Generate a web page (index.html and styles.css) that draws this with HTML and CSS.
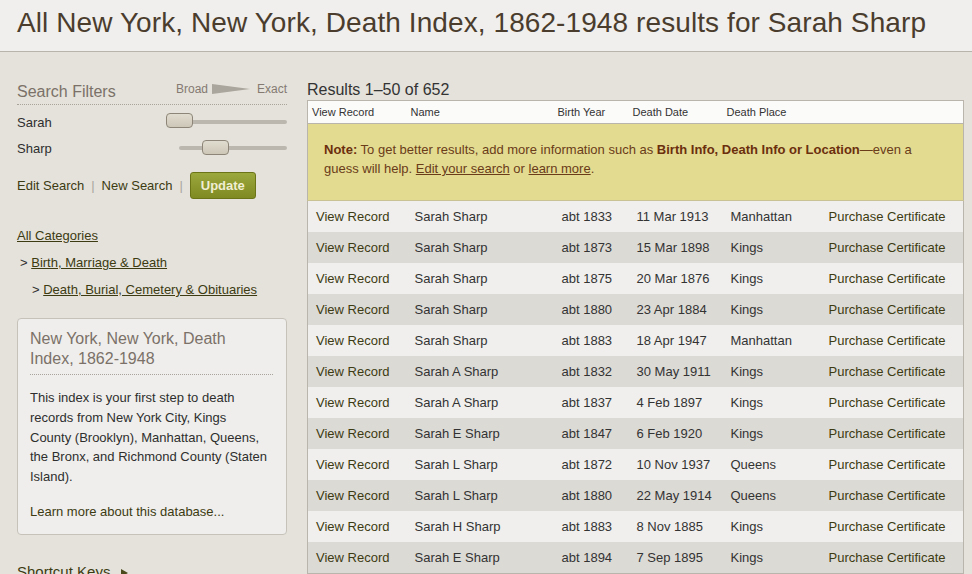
FILE: index.html
```html
<!DOCTYPE html>
<html lang="en">
<head>
    <meta charset="UTF-8">
    <title>Death Index Results</title>
    <link rel="stylesheet" href="styles.css">
</head>
<body>
    <header class="page-head">
        <h1>All New York, New York, Death Index, 1862-1948 results for Sarah Sharp</h1>
    </header>

    <div class="layout">
        <!-- Linke Spalte: Filter und Kategorien -->
        <aside class="sidebar">
            <div class="filter-head">
                <span class="filter-title">Search Filters</span>
                <span class="scale">
                    Broad
                    <svg class="wedge" width="38" height="12" viewBox="0 0 38 12"><polygon points="0,1 38,6 0,11" fill="#aaa59d"/></svg>
                    Exact
                </span>
            </div>

            <div class="filter-row first">
                <span>Sarah</span>
                <div class="slider slider-long"><span class="thumb"></span></div>
            </div>
            <div class="filter-row">
                <span>Sharp</span>
                <div class="slider slider-short"><span class="thumb"></span></div>
            </div>

            <div class="actions">
                <a href="#">Edit Search</a>
                <span class="sep">|</span>
                <a href="#">New Search</a>
                <span class="sep">|</span>
                <button class="update-btn">Update</button>
            </div>

            <ul class="categories">
                <li><a href="#" class="ul">All Categories</a></li>
                <li class="lvl1">&gt; <a href="#" class="ul">Birth, Marriage &amp; Death</a></li>
                <li class="lvl2">&gt; <a href="#" class="ul">Death, Burial, Cemetery &amp; Obituaries</a></li>
            </ul>

            <div class="about-box">
                <h2>New York, New York, Death Index, 1862-1948</h2>
                <p>This index is your first step to death records from New York City, Kings County (Brooklyn), Manhattan, Queens, the Bronx, and Richmond County (Staten Island).</p>
                <a href="#" class="learn">Learn more about this database...</a>
            </div>

            <div class="shortcuts">Shortcut Keys <svg class="arrow" width="7" height="8" viewBox="0 0 7 8"><polygon points="0,0 7,4 0,8" fill="#4b4a1c"/></svg></div>
        </aside>

        <!-- Rechte Spalte: Ergebnisse -->
        <main class="results">
            <div class="results-count">Results 1–50 of 652</div>
            <table class="result-table">
                <colgroup>
                    <col class="c1"><col class="c2"><col class="c3"><col class="c4"><col class="c5"><col class="c6">
                </colgroup>
                <thead>
                    <tr>
                        <th>View Record</th><th>Name</th><th>Birth Year</th><th>Death Date</th><th>Death Place</th><th></th>
                    </tr>
                </thead>
                <tbody class="note-body">
                    <tr>
                        <td colspan="6" class="note">
                            <b>Note:</b> To get better results, add more information such as <b>Birth Info, Death Info or Location</b>—even a guess will help. <a href="#">Edit your search</a> or <a href="#">learn more</a>.
                        </td>
                    </tr>
                </tbody>
                <tbody class="rows">
                    <tr><td class="lnk">View Record</td><td>Sarah Sharp</td><td>abt 1833</td><td>11 Mar 1913</td><td>Manhattan</td><td class="lnk">Purchase Certificate</td></tr>
                    <tr><td class="lnk">View Record</td><td>Sarah Sharp</td><td>abt 1873</td><td>15 Mar 1898</td><td>Kings</td><td class="lnk">Purchase Certificate</td></tr>
                    <tr><td class="lnk">View Record</td><td>Sarah Sharp</td><td>abt 1875</td><td>20 Mar 1876</td><td>Kings</td><td class="lnk">Purchase Certificate</td></tr>
                    <tr><td class="lnk">View Record</td><td>Sarah Sharp</td><td>abt 1880</td><td>23 Apr 1884</td><td>Kings</td><td class="lnk">Purchase Certificate</td></tr>
                    <tr><td class="lnk">View Record</td><td>Sarah Sharp</td><td>abt 1883</td><td>18 Apr 1947</td><td>Manhattan</td><td class="lnk">Purchase Certificate</td></tr>
                    <tr><td class="lnk">View Record</td><td>Sarah A Sharp</td><td>abt 1832</td><td>30 May 1911</td><td>Kings</td><td class="lnk">Purchase Certificate</td></tr>
                    <tr><td class="lnk">View Record</td><td>Sarah A Sharp</td><td>abt 1837</td><td>4 Feb 1897</td><td>Kings</td><td class="lnk">Purchase Certificate</td></tr>
                    <tr><td class="lnk">View Record</td><td>Sarah E Sharp</td><td>abt 1847</td><td>6 Feb 1920</td><td>Kings</td><td class="lnk">Purchase Certificate</td></tr>
                    <tr><td class="lnk">View Record</td><td>Sarah L Sharp</td><td>abt 1872</td><td>10 Nov 1937</td><td>Queens</td><td class="lnk">Purchase Certificate</td></tr>
                    <tr><td class="lnk">View Record</td><td>Sarah L Sharp</td><td>abt 1880</td><td>22 May 1914</td><td>Queens</td><td class="lnk">Purchase Certificate</td></tr>
                    <tr><td class="lnk">View Record</td><td>Sarah H Sharp</td><td>abt 1883</td><td>8 Nov 1885</td><td>Kings</td><td class="lnk">Purchase Certificate</td></tr>
                    <tr><td class="lnk">View Record</td><td>Sarah E Sharp</td><td>abt 1894</td><td>7 Sep 1895</td><td>Kings</td><td class="lnk">Purchase Certificate</td></tr>
                </tbody>
            </table>
        </main>
    </div>
</body>
</html>
```

FILE: styles.css
```css
/* Grundlayout */
body {
    margin: 0;
    font-family: "Liberation Sans", Arial, sans-serif;
    background-color: #e4e2db;
    color: #333;
    overflow: hidden;
}

a {
    color: #3d3b12;
    text-decoration: none;
}

/* Kopfzeile */
.page-head {
    background-color: #f0efed;
    border-bottom: 1px solid #b8b3ab;
    padding: 7px 17px 12px;
}

.page-head h1 {
    margin: 0;
    font-size: 28px;
    font-weight: normal;
    line-height: 32px;
    letter-spacing: 0.09px;
    color: #4b3d2e;
    white-space: nowrap;
}

.layout {
    display: flex;
    align-items: flex-start;
    padding-left: 17px;
}

/* Seitenleiste */
.sidebar {
    width: 270px;
    flex-shrink: 0;
    padding-top: 30px;
    font-size: 13px;
}

.filter-head {
    display: flex;
    justify-content: space-between;
    align-items: center;
    height: 20px;
    padding-bottom: 2px;
    border-bottom: 1px dotted #a8a39b;
}

.filter-title {
    font-size: 16px;
    color: #7b7168;
}

.scale {
    display: flex;
    align-items: center;
    font-size: 12px;
    color: #847a72;
    margin-top: -6px;
}

.wedge {
    margin: 0 7px 0 4px;
    width: 38px;
}

.filter-row {
    display: flex;
    justify-content: space-between;
    align-items: center;
    height: 26px;
    color: #2e2e2e;
}

.filter-row.first {
    margin-top: 4px;
}

.slider {
    position: relative;
    height: 4px;
    border-radius: 2px;
    background-color: #bcb7ae;
}

.slider-long { width: 121px; }
.slider-short { width: 108px; }

.thumb {
    position: absolute;
    top: -6px;
    width: 25px;
    height: 13px;
    border: 1px solid #8d8678;
    border-radius: 4px;
    background: linear-gradient(#e0dccf, #cdc7b8);
}

.slider-long .thumb { left: 0; top: -7px; }
.slider-short .thumb { left: 23px; }

.actions {
    display: flex;
    align-items: center;
    margin-top: 11px;
    height: 27px;
}

.sep {
    color: #aaa69e;
    margin: 0 7px;
}

.update-btn {
    width: 66px;
    height: 27px;
    font-family: inherit;
    font-size: 13px;
    font-weight: bold;
    color: #f0eed3;
    border: 1px solid #6c7418;
    border-radius: 3px;
    background: linear-gradient(#9ba83c, #7f8a22);
    padding: 0;
}

/* Kategorien */
.categories {
    list-style: none;
    margin: 23px 0 0;
    padding: 0;
    color: #2e2e2e;
}

.categories li {
    line-height: 27px;
}

.categories .lvl1 { padding-left: 3px; }
.categories .lvl2 { padding-left: 15px; }

.ul {
    text-decoration: underline;
}

/* Datenbank-Box */
.about-box {
    margin-top: 15px;
    background-color: #efeeec;
    border: 1px solid #c6c2ba;
    border-radius: 4px;
    padding: 10px 13px 12px 12px;
}

.about-box h2 {
    margin: 0;
    font-size: 16px;
    font-weight: normal;
    line-height: 20px;
    color: #7b7168;
    padding-bottom: 5px;
    border-bottom: 1px dotted #a8a39b;
}

.about-box p {
    margin: 13px 4px 0 0;
    line-height: 19.75px;
    color: #2e2e2e;
}

.learn {
    display: block;
    margin-top: 15px;
    line-height: 20px;
}

.shortcuts {
    margin-top: 28px;
    font-size: 15px;
    color: #3d3b12;
}

.arrow {
    margin-left: 6px;
}

/* Ergebnisbereich */
.results {
    margin-left: 20px;
    width: 657px;
    padding-top: 28px;
}

.results-count {
    font-size: 16px;
    line-height: 20px;
    color: #333;
}

.result-table {
    width: 657px;
    table-layout: fixed;
    border-collapse: collapse;
    border: 1px solid #b9b5ad;
    font-size: 13px;
}

.c1 { width: 99px; }
.c2 { width: 147px; }
.c3 { width: 75px; }
.c4 { width: 94px; }
.c5 { width: 98px; }

.result-table th {
    height: 22px;
    padding: 0 0 0 4px;
    text-align: left;
    font-size: 11px;
    font-weight: normal;
    background-color: #fbfbfa;
    border-bottom: 1px solid #b9b5ad;
}

.rows td {
    height: 31px;
    padding: 0 0 0 8px;
    white-space: nowrap;
}

.rows tr:nth-child(odd) td { background-color: #f0efed; }
.rows tr:nth-child(even) td { background-color: #dcdad5; }

.rows .lnk {
    color: #3d3b12;
}

/* Hinweisbox */
.note {
    padding: 16px 16px 22px 16px;
    line-height: 19px;
    color: #6a3c19;
    background-color: #e3db90;
    border-bottom: 1px solid #c9c294;
}

.note b {
    color: #6b2f0e;
}

.note a {
    color: #6a3c19;
    text-decoration: underline;
}
```
